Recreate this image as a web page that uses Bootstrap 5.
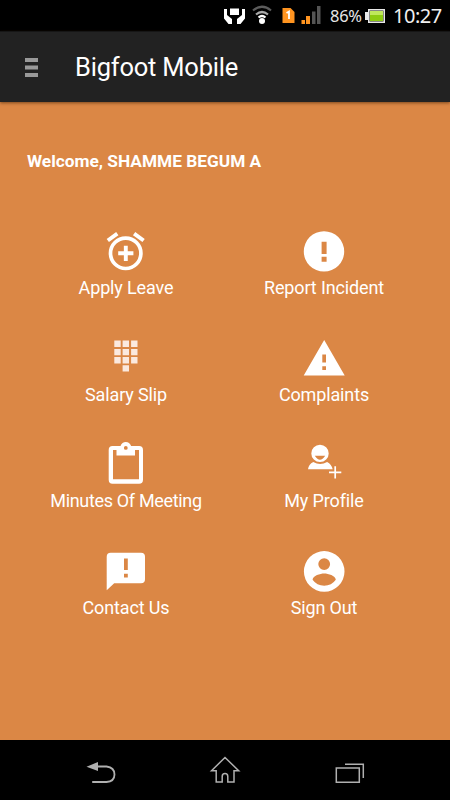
<!DOCTYPE html>
<html lang="en">
<head>
<meta charset="utf-8">
<meta name="viewport" content="width=device-width, initial-scale=1">
<title>Bigfoot Mobile</title>
<link href="https://cdn.jsdelivr.net/npm/bootstrap@5.3.0/dist/css/bootstrap.min.css" rel="stylesheet">
<style>
body { font-family: Roboto, "Noto Sans", sans-serif; background: #db8745; }
svg { display: block; flex: none; }
.screen { width: 450px; height: 800px; }
.statusbar { height: 31px; background: #000; padding-right: 8px; }
.battery-text { font: 16.5px/31px "Noto Sans", sans-serif; letter-spacing: -.3px; width: 33px; color: #e6e6e6; white-space: nowrap; }
.battery-icon { margin-left: 2px; }
.clock { font: 20px/32px "Noto Sans", sans-serif; letter-spacing: -.5px; width: 49px; margin-left: 8px; color: #f0f0f0; white-space: nowrap; }
.appbar { height: 71px; background: #222; border-top: 1px solid #161616; padding-left: 25px; box-shadow: 0 1px 3px rgba(60,30,0,.6); z-index: 1; }
.app-title { font-size: 25.5px; line-height: 40px; margin-left: 37px; letter-spacing: -.22px; }
.content { padding: 47px 27px 0; background: #db8745; }
.welcome { font-size: 17.3px; line-height: 24px; margin-bottom: 55px; }
.tile { height: 106.67px; font-size: 18px; letter-spacing: -.14px; }
.tile-label { line-height: 24px; white-space: nowrap; }
.tile-label-long { letter-spacing: -.33px; }
.softkeys { height: 60px; background: #000; }
</style>
<script src="https://cdn.jsdelivr.net/npm/bootstrap@5.3.0/dist/js/bootstrap.bundle.min.js"></script>
</head>
<body>
<div class="screen d-flex flex-column overflow-hidden">
  <div class="statusbar d-flex align-items-center justify-content-end flex-shrink-0">
    <svg width="106" height="31" viewBox="0 0 106 31">
      <path fill="#fff" d="M6 8.500h9V15H6zM0 9h3v6l5 4v5H4.500L0 18.500zM21 9h-3v6l-5 4v5h3.500L21 18.500z"/>
      <g fill="none" stroke-width="2.200"><path stroke="#5c5c5c" d="M29 10.500Q38 3 47 10.500"/><path stroke="#a8a8a8" d="M32 14.500Q38 9.500 44 14.500"/><path stroke="#fff" d="M34.500 17.500Q38 14.500 41.500 17.500"/></g>
      <circle cx="38" cy="21" r="3" fill="#fff"/>
      <path fill="#ff9420" d="M58.500 8h8l4 4v11h-12z"/><path d="M62.500 13l2.500-1.500V19" fill="none" stroke="#fff" stroke-width="1.800"/>
      <path fill="#ff9420" d="M77.500 20H81v4h-3.500zM82 16h4v8h-4z"/><path fill="#555" d="M88 11.500h3.500V24H88zM93 6h3.500v18H93z"/>
    </svg>
    <span class="battery-text">86%</span>
    <svg class="battery-icon" width="20" height="31" viewBox="0 0 20 31"><path fill="#e8e8e8" d="M3 9h17v14H3v-3H0v-8h3z"/><path fill="#222" d="M4.500 10.500h14v11h-14z"/><path fill="#8dcb12" d="M5 11h13v10H5z"/><path fill="#bfe85c" d="M5 11h13v4H5z"/></svg>
    <span class="clock">10:27</span>
  </div>
  <header class="appbar d-flex align-items-center text-white flex-shrink-0 position-relative">
    <svg width="13" height="19" viewBox="0 0 13 19" fill="#999"><path d="M0 0h13v4H0zM0 7.500h13v4H0zM0 15h13v4H0z"/></svg>
    <h1 class="app-title fw-normal mb-0">Bigfoot Mobile</h1>
  </header>
  <main class="content flex-grow-1 text-white">
    <p class="welcome fw-bold">Welcome, SHAMME BEGUM A</p>
    <div class="row g-0 text-center">
      <div class="col-6 tile d-flex flex-column align-items-center">
        <svg width="48" height="48" viewBox="0 0 48 48" fill="none" stroke="#fff"><circle cx="23.700" cy="25.300" r="15.200" stroke-width="3.700"/><path stroke-width="3.900" d="M5.800 12.500L15.300 5.600M41.600 12.500L32.100 5.600M16.200 25.300h15.200M23.800 17.700v15.200"/></svg>
        <span class="tile-label">Apply Leave</span>
      </div>
      <div class="col-6 tile d-flex flex-column align-items-center">
        <svg width="48" height="48" viewBox="0 0 48 48" fill="#fff"><path fill-rule="evenodd" d="M24 3.200a20.200 20.200 0 1 1 0 40.400a20.200 20.200 0 1 1 0-40.400zM21.600 13.700v12.300h5V13.700zM21.600 28.700v5h5v-5z"/></svg>
        <span class="tile-label">Report Incident</span>
      </div>
      <div class="col-6 tile d-flex flex-column align-items-center">
        <svg width="48" height="48" viewBox="0 0 48 48" fill="#fbe9de"><path d="M12.300 5.500h6.400v6.400h-6.400zM20.600 5.500H27v6.400h-6.400zM29.100 5.500h6.400v6.400h-6.400zM12.300 13.900h6.400v6.400h-6.400zM20.600 13.900H27v6.400h-6.400zM29.100 13.900h6.400v6.400h-6.400zM12.300 22.100h6.400v6.400h-6.400zM20.600 22.100H27v6.400h-6.400zM29.100 22.100h6.400v6.400h-6.400zM20.600 30.300H27v6.200h-6.400z"/></svg>
        <span class="tile-label">Salary Slip</span>
      </div>
      <div class="col-6 tile d-flex flex-column align-items-center">
        <svg width="48" height="48" viewBox="0 0 48 48" fill="#fff"><path fill-rule="evenodd" d="M24.200 5.100L44.700 40.500H3.700zM22.300 19.500v8H26v-8zM22.300 31.300v3.800H26v-3.800z"/></svg>
        <span class="tile-label">Complaints</span>
      </div>
      <div class="col-6 tile d-flex flex-column align-items-center">
        <svg width="48" height="48" viewBox="0 0 48 48" fill="#fff"><path fill-rule="evenodd" d="M10.500 5h8C19.500 2.300 21.300 1 23.800 1s4.300 1.300 5.300 4h8Q41 5 41 9v29.700q0 4-3.900 4H10.500q-3.800 0-3.800-4V9q0-4 3.800-4zM11 9v29.200h26V9h-4v5.500H14.500V9zM23.800 5a1.900 1.900 0 1 0 0 3.800a1.900 1.900 0 1 0 0-3.800z"/></svg>
        <span class="tile-label tile-label-long">Minutes Of Meeting</span>
      </div>
      <div class="col-6 tile d-flex flex-column align-items-center">
        <svg width="48" height="48" viewBox="0 0 48 48" fill="#fff"><path fill-rule="evenodd" d="M20 3.700a8.700 8.700 0 1 1 0 17.400a8.700 8.700 0 1 1 0-17.400zM14.800 14.800q5.200 8 10.400 0z"/><path d="M8 28.300q.6-4.800 5.300-7.200 6.900 3.800 13.800 0 4.500 2.400 5.600 7.200z"/><path fill="none" stroke="#fff" stroke-width="1.700" d="M29 31.300h12.300M35.200 25.200v12.200"/></svg>
        <span class="tile-label">My Profile</span>
      </div>
      <div class="col-6 tile d-flex flex-column align-items-center">
        <svg width="48" height="48" viewBox="0 0 48 48" fill="#fff"><path fill-rule="evenodd" d="M8.700 4.700H39q4 0 4 4v22.600q0 4-4 4H12.200L4.700 42.300V8.700q0-4 4-4zM22 10.500V22h3.800V10.500zM22 25.700v3.800h3.800v-3.800z"/></svg>
        <span class="tile-label">Contact Us</span>
      </div>
      <div class="col-6 tile d-flex flex-column align-items-center">
        <svg width="48" height="48" viewBox="0 0 48 48" fill="#fff"><path fill-rule="evenodd" d="M24.200 3.100a20.300 20.300 0 1 1 0 40.600a20.300 20.300 0 1 1 0-40.600zM24.200 10.200a5.900 5.900 0 1 0 0 11.800a5.900 5.900 0 1 0 0-11.800zM12.600 31.800c.4-4 7.500-6.200 11.600-6.200s11.200 2.200 11.600 6.200q-4.200 5.900-11.600 5.900t-11.600-5.900z"/></svg>
        <span class="tile-label">Sign Out</span>
      </div>
    </div>
  </main>
  <nav class="softkeys flex-shrink-0 d-flex justify-content-center align-items-center">
    <svg width="280" height="60" viewBox="0 0 280 60" fill="none" stroke="#b0b0b0" stroke-width="1.800"><path fill="#b0b0b0" stroke="none" d="M1.500 26.700L13 22v9z"/><path d="M12 26.500h9.500q8 1 8 8t-8 7.500H7.200"/><path stroke-width="1.500" d="M126.500 30.700L140 17.500l13.700 13.200h-4.700V42h-6.200v-5.500q0-3-2.800-3t-2.800 3V42h-6V30.700zM251.300 28h23v14.200h-23z"/><path stroke-width="1.500" d="M260 24.200h18.300V38"/></svg>
  </nav>
</div>
</body>
</html>
